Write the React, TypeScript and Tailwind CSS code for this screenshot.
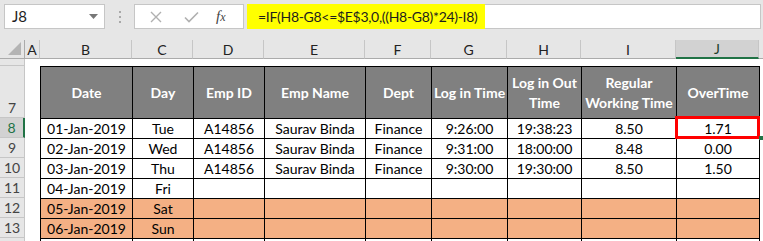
import React from 'react';

const cols = ['A', 'B', 'C', 'D', 'E', 'F', 'G', 'H', 'I', 'J'];

const headers: React.ReactNode[] = [
  'Date',
  'Day',
  'Emp ID',
  'Emp Name',
  'Dept',
  'Log in Time',
  <>Log in Out<br />Time</>,
  <>Regular<br />Working Time</>,
  'OverTime',
];

const rows = [
  { n: 8, fill: false, cells: ['01-Jan-2019', 'Tue', 'A14856', 'Saurav Binda', 'Finance', '9:26:00', '19:38:23', '8.50', '1.71'] },
  { n: 9, fill: false, cells: ['02-Jan-2019', 'Wed', 'A14856', 'Saurav Binda', 'Finance', '9:31:00', '18:00:00', '8.48', '0.00'] },
  { n: 10, fill: false, cells: ['03-Jan-2019', 'Thu', 'A14856', 'Saurav Binda', 'Finance', '9:30:00', '19:30:00', '8.50', '1.50'] },
  { n: 11, fill: false, cells: ['04-Jan-2019', 'Fri', '', '', '', '', '', '', ''] },
  { n: 12, fill: true, cells: ['05-Jan-2019', 'Sat', '', '', '', '', '', '', ''] },
  { n: 13, fill: true, cells: ['06-Jan-2019', 'Sun', '', '', '', '', '', '', ''] },
];

const rowHead = 'flex items-end justify-center bg-[#e6e6e6] border-r border-b border-[#c6c6c6] text-[14px] leading-[19px] text-[#444]';
const tableCell = 'flex items-center justify-center border-l border-t border-black text-[14px] text-black';

const FormulaBar = () => (
  <div className="flex h-[40px] items-start pt-[4px] bg-[#e6e6e6]">
    <div className="ml-[4px] flex h-[25px] w-[101px] items-center justify-between border border-[#c6c6c6] bg-white pl-[7px] pr-[6px]">
      <span className="text-[15px] text-[#1e1e1e]">J8</span>
      <svg width="9" height="5" viewBox="0 0 9 5">
        <path d="M0 0 L9 0 L4.5 5 Z" fill="#777" />
      </svg>
    </div>
    <div className="ml-[14px] mr-[13px] flex h-[25px] flex-col items-center justify-center gap-[3px]">
      <span className="h-[2px] w-[2px] bg-[#a8a8a8]" />
      <span className="h-[2px] w-[2px] bg-[#a8a8a8]" />
      <span className="h-[2px] w-[2px] bg-[#a8a8a8]" />
    </div>
    <div className="flex h-[25px] w-[110px] items-center border border-[#c6c6c6] bg-white">
      <svg className="ml-[15px]" width="12" height="12" viewBox="0 0 12 12">
        <path d="M1 1 L11 11 M11 1 L1 11" stroke="#b0b0b0" strokeWidth="1.4" />
      </svg>
      <svg className="ml-[22px]" width="15" height="12" viewBox="0 0 15 12">
        <path d="M1 6.5 L5 10.5 L14 1.5" stroke="#b0b0b0" strokeWidth="1.6" fill="none" />
      </svg>
      <span className="ml-[17px] text-[15px] italic text-[#444]" style={{ fontFamily: '"Liberation Serif", serif' }}>
        f<span className="text-[12px]">x</span>
      </span>
    </div>
    <div className="ml-[3px] mr-[2px] flex h-[25px] flex-1 items-stretch border-y border-r border-[#c6c6c6] bg-white">
      <div className="-my-px flex w-[238px] items-center whitespace-nowrap bg-[#ffff00] pl-[11px] text-[14px] tracking-[-0.3px] text-[#1e1e1e]">
        =IF(H8-G8&lt;=$E$3,0,((H8-G8)*24)-I8)
      </div>
    </div>
  </div>
);

export default function App() {
  return (
    <div className="h-[241px] w-[763px] overflow-hidden bg-white" style={{ fontFamily: 'Lato, "Liberation Sans", sans-serif' }}>
      <FormulaBar />
      <div className="relative grid grid-cols-[25px_15px_92px_61px_71px_101px_66px_76px_74px_95px_83px_4px] grid-rows-[19px_7px_52px_repeat(6,20px)_3px]">
        {/* column headers */}
        <div className="relative border-r border-b border-[#ababab] bg-[#e6e6e6]">
          <svg className="absolute right-[3px] bottom-[3px]" width="13" height="13" viewBox="0 0 13 13">
            <path d="M13 0 L13 13 L0 13 Z" fill="#b4b4b4" />
          </svg>
        </div>
        {cols.map((c) => (
          <div
            key={c}
            className={
              c === 'J'
                ? 'flex items-center justify-center border-r border-[#c6c6c6] border-b-2 border-b-[#217346] bg-[#d2d2d2] text-[14px] text-[#1e3d2a]'
                : 'flex items-center justify-center border-r border-b border-[#c6c6c6] border-b-[#ababab] bg-[#e6e6e6] text-[14px] text-[#222]'
            }
          >
            {c}
          </div>
        ))}
        <div className="border-b border-[#ababab] bg-[#e6e6e6]" />

        {/* row 6, scrolled mostly out of view */}
        <div className="border-r border-b border-[#c6c6c6] bg-[#e6e6e6]" />
        {Array.from({ length: 11 }).map((_, i) => (
          <div key={i} className="bg-white" />
        ))}

        {/* row 7 headers */}
        <div className={rowHead}>7</div>
        <div className="bg-white" />
        {headers.map((h, i) => (
          <div key={i} className={`${tableCell} bg-[#808080] text-center text-[14px] font-bold leading-[20px] text-white`}>
            {h}
          </div>
        ))}
        <div className="border-l border-black bg-white" />

        {/* data rows */}
        {rows.map((r) => (
          <React.Fragment key={r.n}>
            <div
              className={
                r.n === 8
                  ? 'flex items-end justify-center border-b border-[#c6c6c6] border-r-2 border-r-[#217346] bg-[#d2d2d2] text-[14px] leading-[19px] text-[#217346]'
                  : rowHead
              }
            >
              {r.n}
            </div>
            <div className="bg-white" />
            {r.cells.map((v, i) => (
              <div key={i} className={`${tableCell} ${r.fill ? 'bg-[#f4b084]' : 'bg-white'}`}>
                {v}
              </div>
            ))}
            <div className="border-l border-black bg-white" />
          </React.Fragment>
        ))}

        {/* row 14 partial */}
        <div className="border-r border-[#c6c6c6] bg-[#e6e6e6]" />
        <div className="bg-white" />
        {Array.from({ length: 9 }).map((_, i) => (
          <div key={i} className="border-l border-t border-black bg-white" />
        ))}
        <div className="border-l border-black bg-white" />

        {/* active cell */}
        <div className="absolute left-[675px] top-[76px] h-[23px] w-[85px] border-[3px] border-[#ff0000]" />
        <div className="absolute left-[759px] top-[96px] h-[4px] w-[4px] bg-[#217346]" />
      </div>
    </div>
  );
}
